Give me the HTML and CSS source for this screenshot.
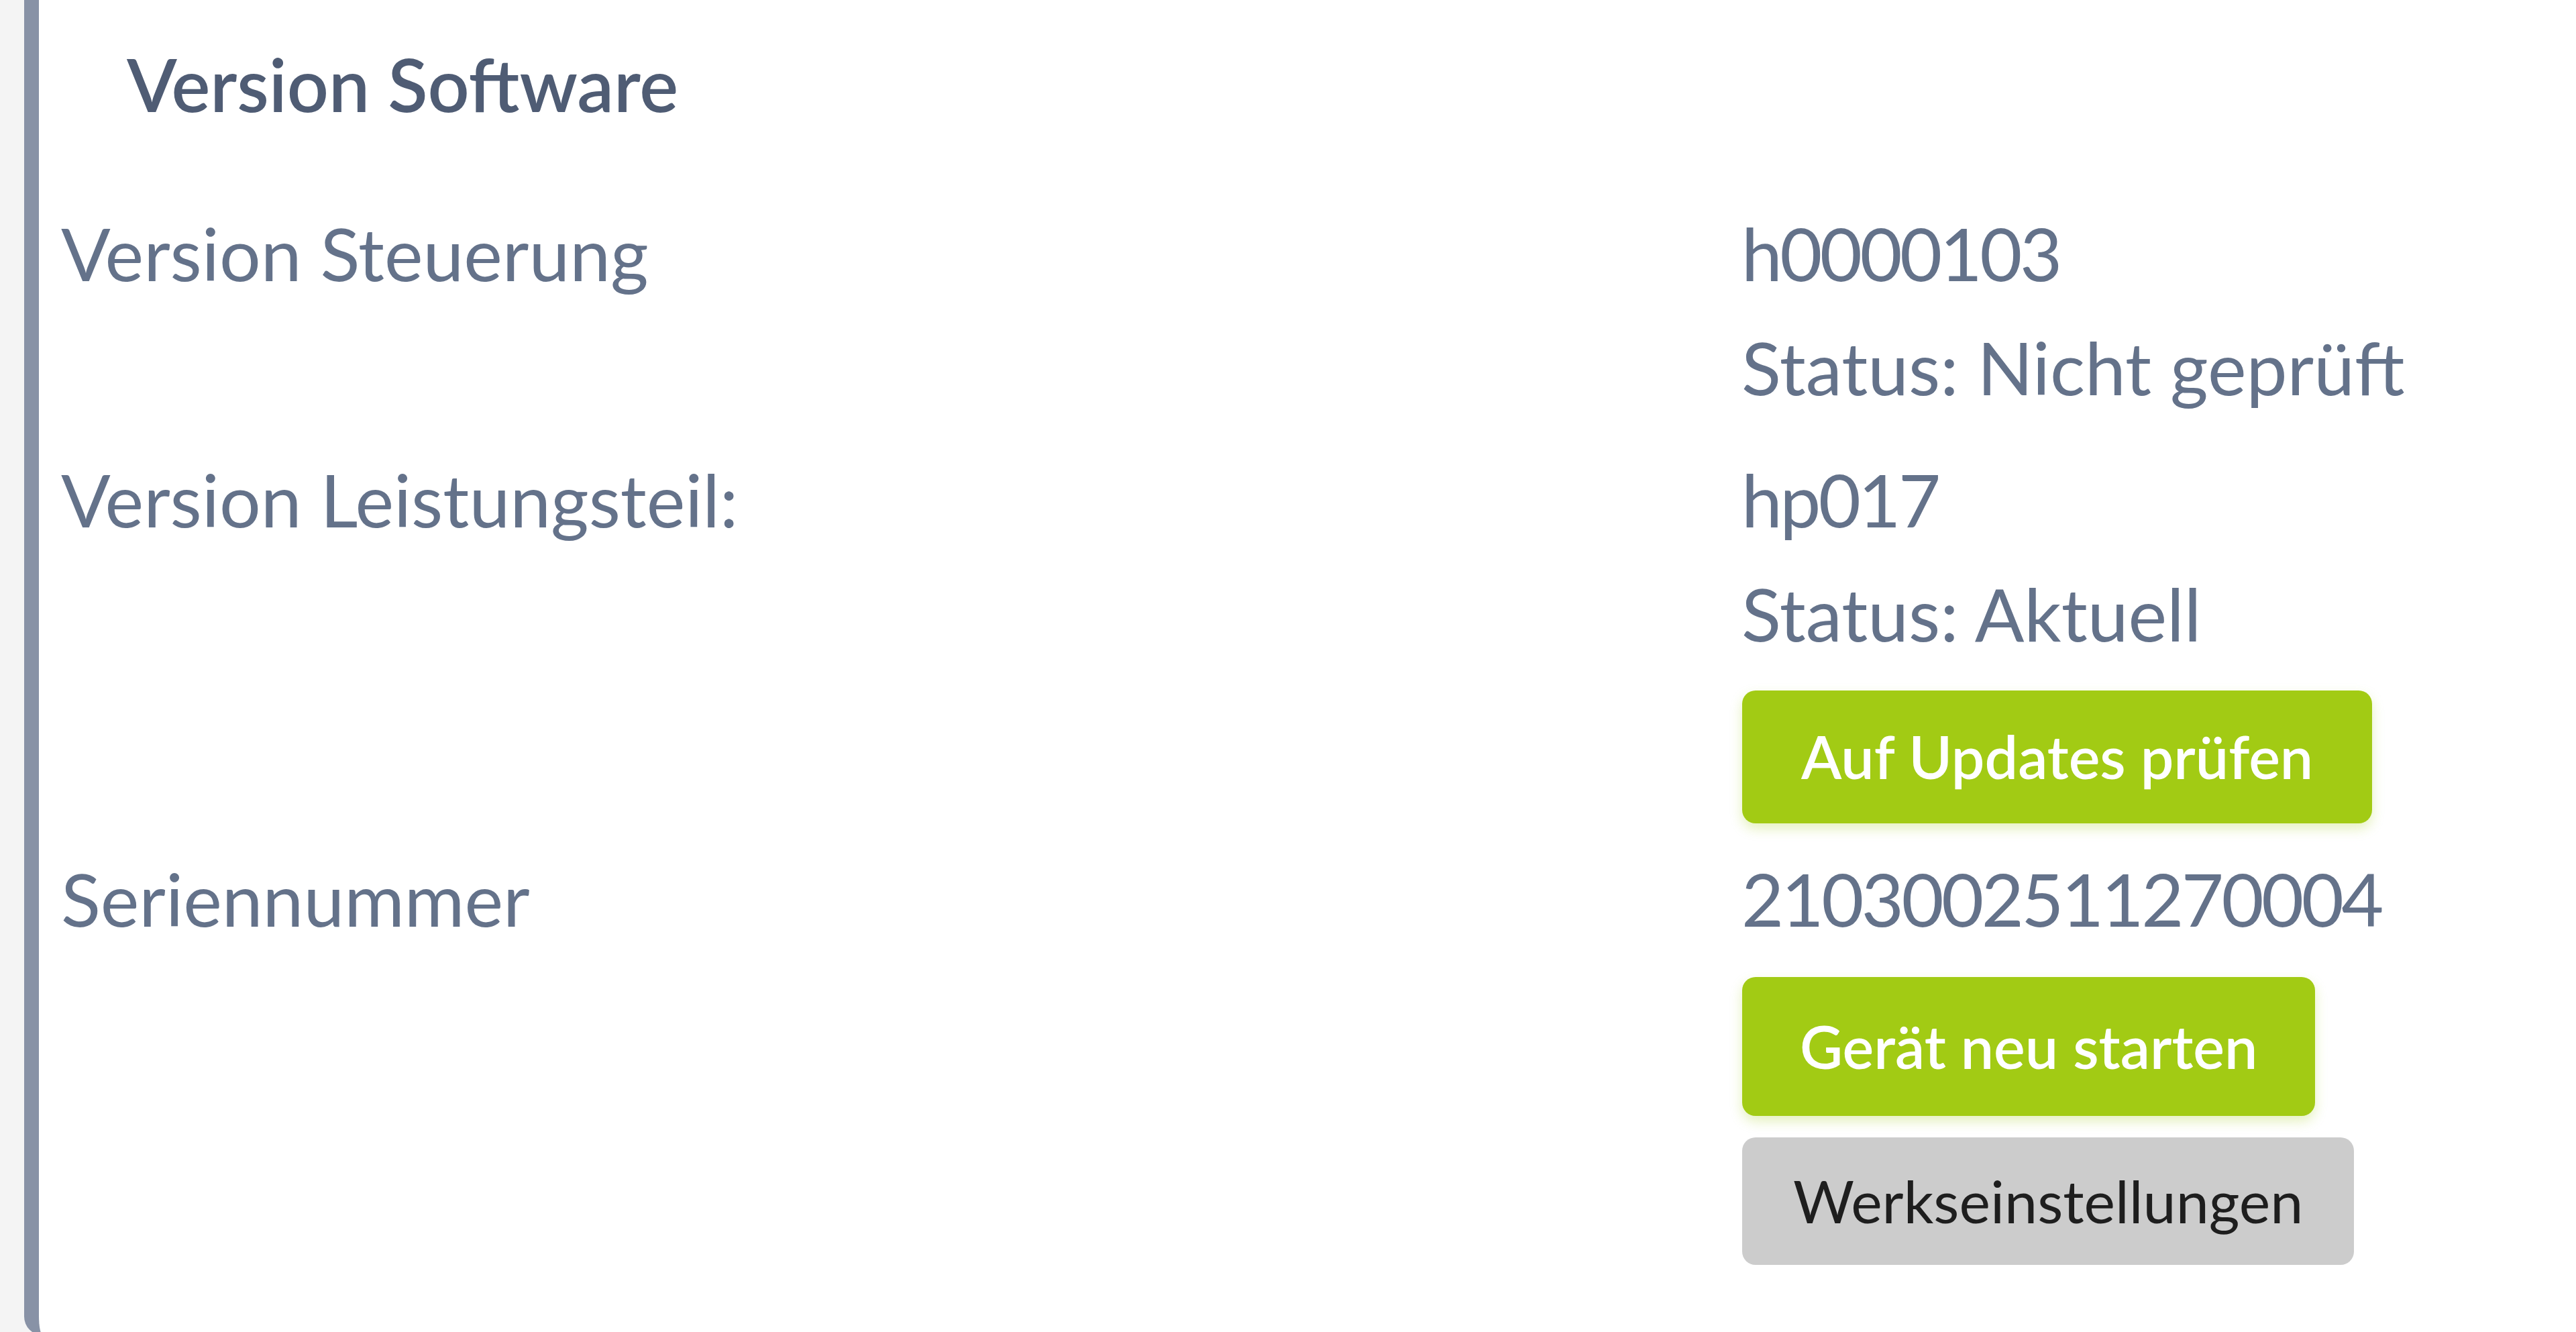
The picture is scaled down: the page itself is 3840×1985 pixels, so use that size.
FILE: index.html
```html
<!DOCTYPE html>
<html lang="de">
<head>
<meta charset="utf-8">
<title>Version Software</title>
<link rel="stylesheet" href="styles.css">
</head>
<body>
<section class="card">
  <h5 class="title">Version Software</h5>
  <div class="rows">
    <div class="row">
      <div class="label">Version Steuerung</div>
      <div class="value">
        <span class="num">h0000103</span>
        <span>Status: Nicht geprüft</span>
      </div>
    </div>
    <div class="row">
      <div class="label">Version Leistungsteil:</div>
      <div class="value">
        <span class="num">hp017</span>
        <span>Status: Aktuell</span>
        <button class="btn btn-green btn-first">Auf Updates prüfen</button>
      </div>
    </div>
    <div class="row">
      <div class="label">Seriennummer</div>
      <div class="value">
        <span class="num">2103002511270004</span>
        <button class="btn btn-green btn-restart">Gerät neu starten</button>
        <button class="btn btn-gray">Werkseinstellungen</button>
      </div>
    </div>
  </div>
</section>
</body>
</html>
```
FILE: styles.css
```css
html, body {
  margin: 0;
  padding: 0;
}
body {
  background: #f4f4f4;
  font-family: Lato, "Noto Sans", sans-serif;
  overflow: hidden;
}
.card {
  box-sizing: border-box;
  margin-left: 36px;
  height: 1990px;
  background: #ffffff;
  border-left: 22px solid #8892a6;
  border-bottom-left-radius: 28px;
  padding: 40px 0 0 33px;
}
.title {
  margin: 0 0 82px 98px;
  font-size: 109px;
  line-height: 170px;
  font-weight: 600;
  color: #4f5c74;
}
.rows {
  display: flex;
  flex-direction: column;
  gap: 27px;
}
.row {
  display: grid;
  grid-template-columns: 2505px auto;
  font-size: 109px;
  line-height: 170px;
  color: #64728a;
}
.value {
  display: flex;
  flex-direction: column;
  align-items: flex-start;
}
.num {
  letter-spacing: -3.6px;
}
.btn {
  display: inline-flex;
  align-items: center;
  margin-left: 1px;
  border: 0;
  border-radius: 20px;
  font-family: Lato, "Noto Sans", sans-serif;
  font-size: 88px;
  line-height: 1.2;
  cursor: pointer;
}
.btn-green {
  padding: 0 88px;
  background: #a2cb14;
  color: #ffffff;
  font-weight: 600;
  box-shadow: 0 8px 18px rgba(162, 203, 20, 0.28);
}
.btn-first {
  margin-top: 30px;
  height: 198px;
}
.btn-restart {
  margin-top: 32px;
  height: 207px;
  padding: 0 86px;
}
.btn-gray {
  margin-top: 32px;
  height: 190px;
  padding: 0 76px;
  background: #cccccc;
  color: #1e1e1e;
  font-weight: 400;
}
```
